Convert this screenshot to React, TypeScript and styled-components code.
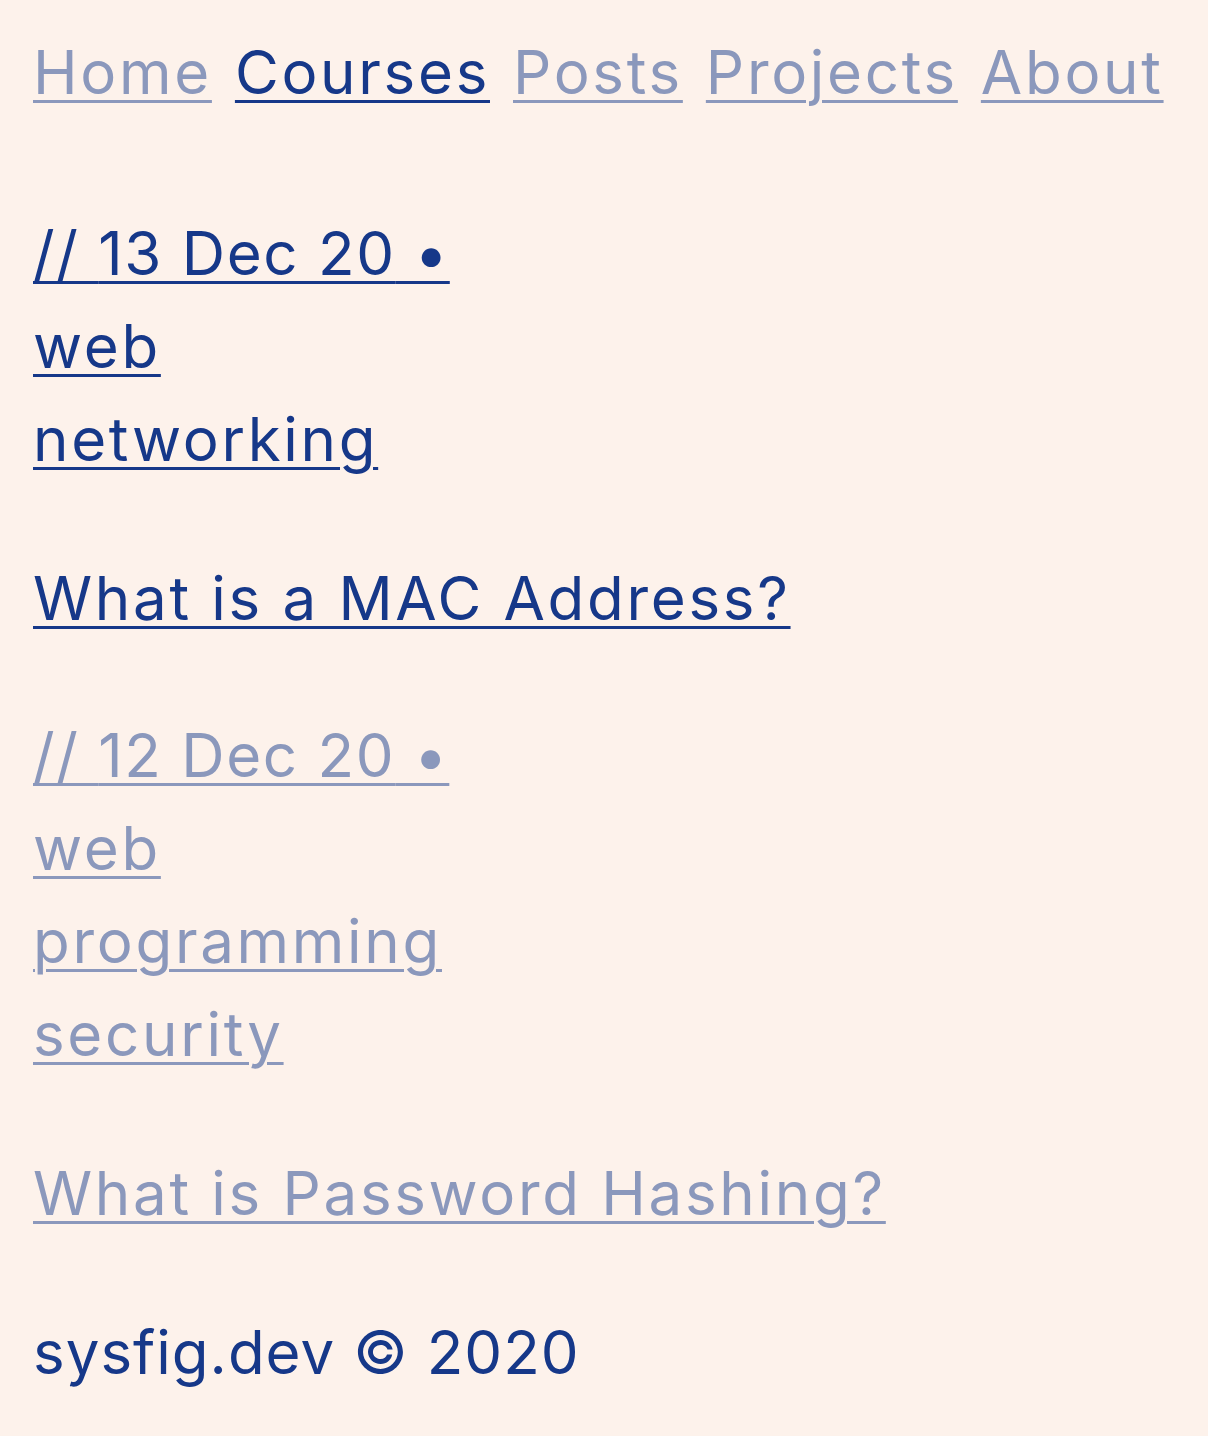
import React from "react";
import styled, { createGlobalStyle } from "styled-components";

const DARK = "#163889";
const LIGHT = "#8b98bc";

const Global = createGlobalStyle`
  html, body { margin: 0; padding: 0; background: #fdf2eb; }
  body {
    font-family: Inter, "Open Sans", sans-serif;
    font-size: 60px;
    letter-spacing: 2.7px;
    line-height: 93px;
    color: ${DARK};
  }
`;

const Page = styled.div`
  display: flex;
  flex-direction: column;
  padding: 26px 0 0 33px;
  min-height: 1410px;
  box-sizing: border-box;
`;

const Nav = styled.nav`
  display: flex;
  gap: 23px;
  margin-bottom: 88px;
`;

const Link = styled.a<{ $active?: boolean }>`
  color: ${(p) => (p.$active ? DARK : LIGHT)};
  text-decoration: underline;
  text-decoration-thickness: 3px;
  text-underline-offset: 6px;
  cursor: pointer;
`;

const NavLink = styled(Link)``;

const DateLink = styled(Link)`
  letter-spacing: 1.7px;
`;

const PostList = styled.main`
  display: flex;
  flex-direction: column;
  gap: 64px;
`;

const Post = styled.article`
  display: flex;
  flex-direction: column;
  gap: 66px;
`;

const Meta = styled.div`
  display: flex;
  flex-direction: column;
  align-items: flex-start;
`;

const Title = styled.h2`
  margin: 0;
  font-size: inherit;
  font-weight: 400;
  line-height: inherit;
`;

const Footer = styled.footer`
  margin-top: 66px;
  color: ${DARK};
  letter-spacing: 1px;
`;

const posts = [
  { date: "13 Dec 20", tags: ["web", "networking"], title: "What is a MAC Address?", active: true },
  { date: "12 Dec 20", tags: ["web", "programming", "security"], title: "What is Password Hashing?", active: false },
];

export default function App() {
  return (
    <>
      <Global />
      <Page>
        <Nav>
          <NavLink>Home</NavLink>
          <NavLink $active>Courses</NavLink>
          <NavLink>Posts</NavLink>
          <NavLink>Projects</NavLink>
          <NavLink>About</NavLink>
        </Nav>
        <PostList>
          {posts.map((p) => (
            <Post key={p.title}>
              <Meta>
                <DateLink $active={p.active}>// {p.date} •</DateLink>
                {p.tags.map((t) => (
                  <Link key={t} $active={p.active}>{t}</Link>
                ))}
              </Meta>
              <Title>
                <Link $active={p.active}>{p.title}</Link>
              </Title>
            </Post>
          ))}
        </PostList>
        <Footer>sysfig.dev © 2020</Footer>
      </Page>
    </>
  );
}
